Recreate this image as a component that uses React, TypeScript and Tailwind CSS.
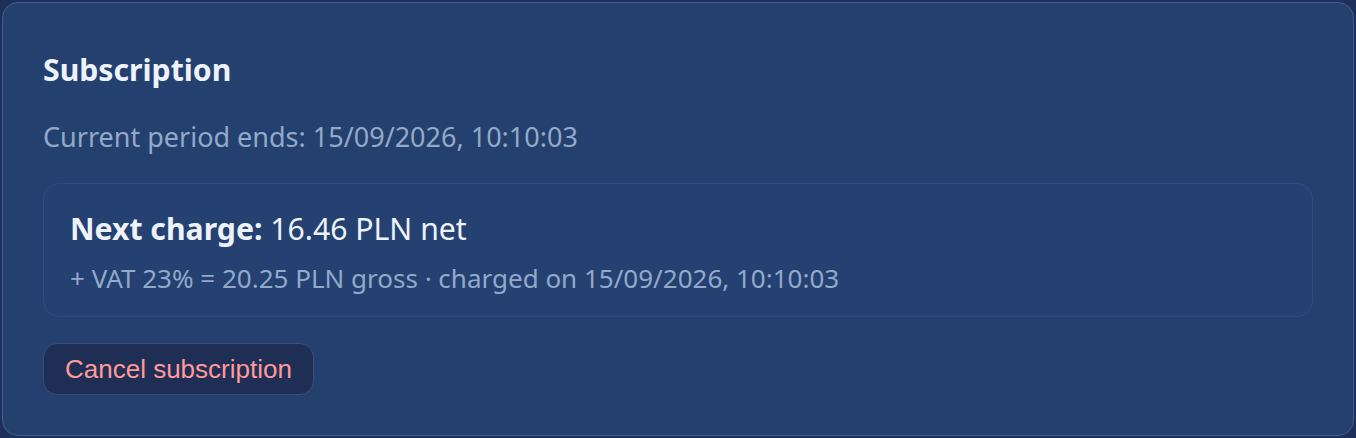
import React from "react";

const font = { fontFamily: '"Noto Sans", "Open Sans", sans-serif' };

const App = () => {
  return (
    <div className="w-full h-[438px] bg-[#1e2f5a] p-[2px]" style={font}>
      <div className="h-full rounded-[16px] border border-[#3e5f8f] bg-[#24406f] px-[40px] pt-[47px] pb-[40px]">
        <h2 className="text-[30.2px] leading-[40px] font-bold text-[#eef3fb]">Subscription</h2>
        <p className="mt-[29px] text-[27px] leading-[36px] text-[#93a9c9]">
          Current period ends: 15/09/2026, 10:10:03
        </p>
        <div className="mt-[28px] rounded-[16px] border border-[#2a4d85] bg-[#244172] px-[26px] pt-[27px] pb-[21px]">
          <div className="text-[30.2px] leading-[36px] text-[#eef3fb]">
            <span className="font-bold">Next charge:</span> 16.46 PLN net
          </div>
          <div className="mt-[14px] text-[26px] leading-[34px] text-[#93a9c9]">
            + VAT 23% = 20.25 PLN gross · charged on 15/09/2026, 10:10:03
          </div>
        </div>
        <button
          className="mt-[26px] h-[52px] px-[21px] rounded-[14px] border border-[#3a4f75] bg-[#1f2e55] text-[26px] text-[#ff9a9a]"
          style={{ fontFamily: '"Liberation Sans", Arial, sans-serif' }}
        >
          Cancel subscription
        </button>
      </div>
    </div>
  );
};

export default App;
